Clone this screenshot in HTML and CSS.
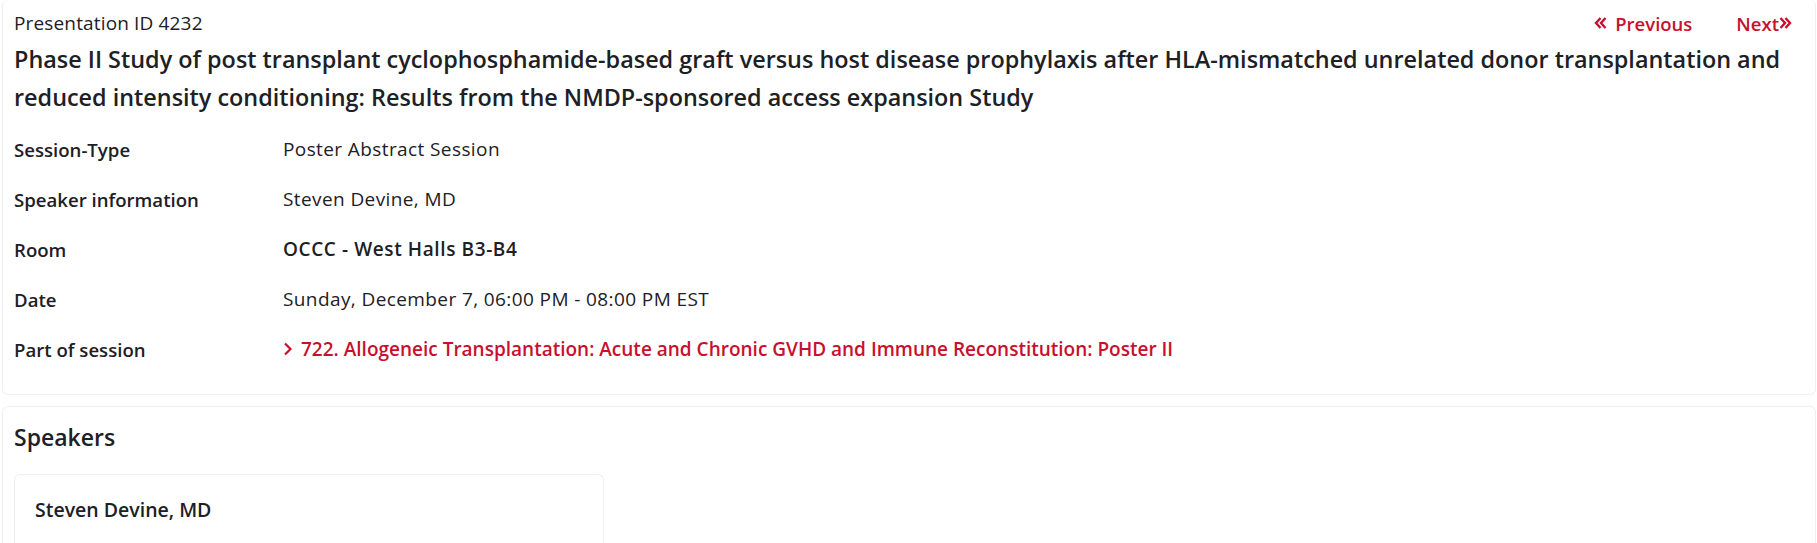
FILE: index.html
```html
<!DOCTYPE html>
<html lang="en">
<head>
    <meta charset="UTF-8">
    <title>Presentation 4232</title>
    <link rel="stylesheet" href="styles.css">
</head>
<body>
    <div class="card detail-card">
        <div class="top-row">
            <span class="presentation-id">Presentation ID 4232</span>
            <div class="pager">
                <a href="#" class="pager-link">
                    <svg class="chev" viewBox="0 0 13 14" width="13" height="14"><path d="M6.5 2 L2 7 L6.5 12 M11.5 2 L7 7 L11.5 12" fill="none" stroke="currentColor" stroke-width="2.4"/></svg>
                    Previous
                </a>
                <a href="#" class="pager-link next">
                    Next<svg class="chev" viewBox="0 0 13 14" width="13" height="14"><path d="M1.5 2 L6 7 L1.5 12 M6.5 2 L11 7 L6.5 12" fill="none" stroke="currentColor" stroke-width="2.4"/></svg>
                </a>
            </div>
        </div>
        <h1 class="title">Phase II Study of post transplant cyclophosphamide-based graft versus host disease prophylaxis after HLA-mismatched unrelated donor transplantation and reduced intensity conditioning: Results from the NMDP-sponsored access expansion Study</h1>

        <div class="info-table">
            <div class="info-row">
                <div class="info-label">Session-Type</div>
                <div class="info-value">Poster Abstract Session</div>
            </div>
            <div class="info-row">
                <div class="info-label">Speaker information</div>
                <div class="info-value">Steven Devine, MD</div>
            </div>
            <div class="info-row">
                <div class="info-label">Room</div>
                <div class="info-value strong">OCCC - West Halls B3-B4</div>
            </div>
            <div class="info-row">
                <div class="info-label">Date</div>
                <div class="info-value">Sunday, December 7, 06:00 PM - 08:00 PM EST</div>
            </div>
            <div class="info-row">
                <div class="info-label">Part of session</div>
                <div class="info-value">
                    <a href="#" class="session-link">
                        <svg class="chev-one" viewBox="0 0 10 16" width="10" height="16"><path d="M2 2.5 L7.5 8 L2 13.5" fill="none" stroke="currentColor" stroke-width="2.2"/></svg>
                        722. Allogeneic Transplantation: Acute and Chronic GVHD and Immune Reconstitution: Poster II
                    </a>
                </div>
            </div>
        </div>
    </div>

    <div class="card speakers-card">
        <h2 class="section-title">Speakers</h2>
        <div class="speaker-box">
            <div class="speaker-name">Steven Devine, MD</div>
        </div>
    </div>
</body>
</html>
```

FILE: styles.css
```css
body {
    margin: 0;
    padding: 0 1px 0 2px;
    font-family: "Open Sans", sans-serif;
    color: #1d2025;
    background: #fff;
}
a {
    text-decoration: none;
}
.card {
    border: 1px solid #efefef;
    border-radius: 6px;
    background: #fff;
}
.detail-card {
    border-top: none;
    padding: 11px 11px 20px;
}
.top-row {
    display: flex;
    justify-content: space-between;
    align-items: center;
    height: 24px;
}
.presentation-id {
    font-size: 19px;
    line-height: 24px;
    letter-spacing: 0.15px;
}
.pager {
    display: flex;
    gap: 44px;
    padding-right: 12px;
}
.pager-link {
    display: flex;
    align-items: center;
    gap: 8px;
    color: #c8102e;
    font-size: 18.5px;
    font-weight: 600;
}
.pager-link.next {
    gap: 0;
}
.chev {
    display: block;
}
.title {
    margin: 5px 0 8px;
    font-size: 23.4px;
    line-height: 38px;
    font-weight: 600;
}
.info-row {
    display: flex;
    align-items: center;
    height: 50px;
    font-size: 19px;
}
.info-label {
    width: 269px;
    font-size: 18.6px;
    font-weight: 600;
}
.info-value {
    letter-spacing: 0.4px;
}
.info-value.strong {
    font-weight: 600;
    letter-spacing: 0.6px;
}
.session-link {
    display: inline-flex;
    align-items: center;
    gap: 8px;
    color: #c8102e;
    font-weight: 600;
    letter-spacing: 0;
}
.chev-one {
    display: block;
}
.speakers-card {
    margin-top: 11px;
    padding: 12px 11px 0;
    border-bottom: none;
    border-radius: 6px 6px 0 0;
    height: 135px;
}
.section-title {
    margin: 0 0 19px;
    font-size: 23px;
    line-height: 36px;
    font-weight: 600;
}
.speaker-box {
    width: 548px;
    border: 1px solid #efefef;
    border-bottom: none;
    border-radius: 6px 6px 0 0;
    padding: 22px 20px 30px;
}
.speaker-name {
    font-size: 19.5px;
    line-height: 25px;
    font-weight: 600;
}
```
